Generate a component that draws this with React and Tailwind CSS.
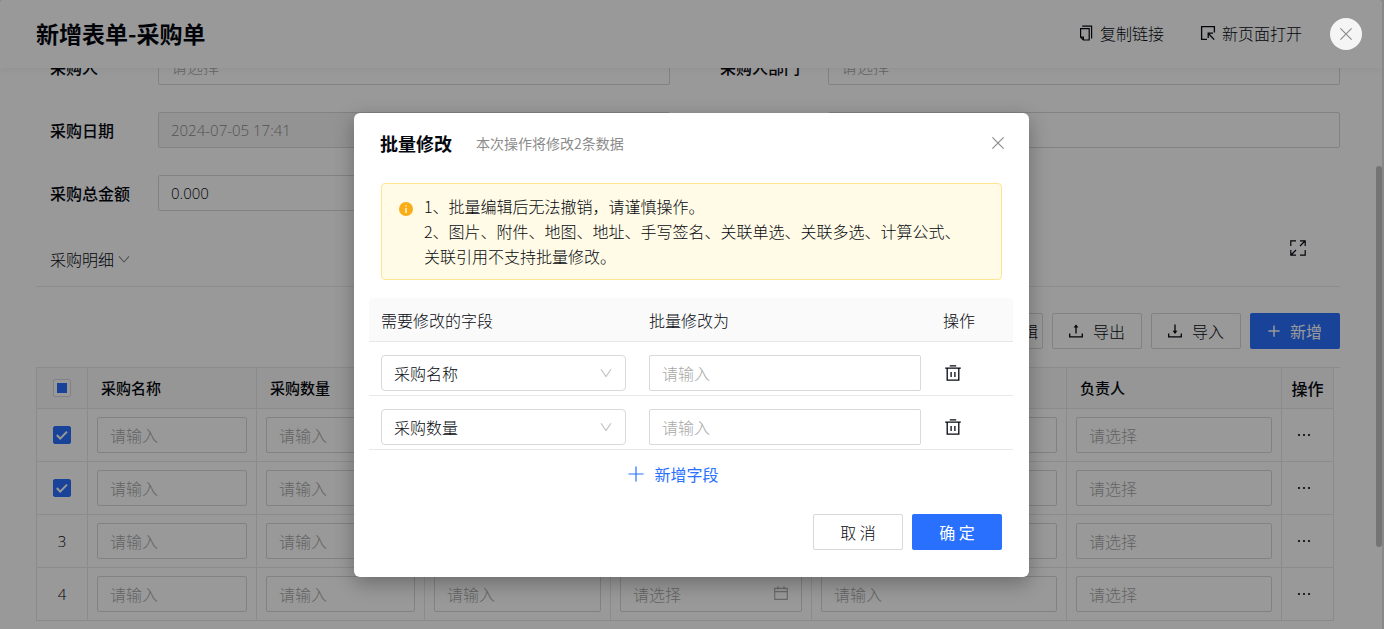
import { useState } from 'react';

const fieldClass = "w-full h-9 rounded-xs border border-[#d9d9d9] bg-white px-3 leading-6 placeholder:text-[16px] placeholder:text-[#a8a8a8] outline-none";

const columns = [
    { key: 'name', title: '采购名称', hint: '请输入' },
    { key: 'count', title: '采购数量', hint: '请输入' },
    { key: 'price', title: '采购单价', hint: '请输入' },
    { key: 'date', title: '到货日期', hint: '请选择', date: true },
    { key: 'remark', title: '备注', hint: '请输入' },
    { key: 'owner', title: '负责人', hint: '请选择' },
];

function CloseIcon({ className }) {
    return (
        <svg viewBox="0 0 14 14" className={className} fill="none" stroke="currentColor" strokeWidth="1.2">
            <path d="M1.4 1.4 12.6 12.6M12.6 1.4 1.4 12.6" />
        </svg>
    );
}

function PlusIcon({ className, strokeWidth }) {
    return (
        <svg viewBox="0 0 16 16" className={className} fill="none" stroke="currentColor" strokeWidth={strokeWidth}>
            <path d="M8 0.5V15.5M0.5 8H15.5" />
        </svg>
    );
}

function ChevronIcon({ className }) {
    return (
        <svg viewBox="0 0 12 12" className={className} fill="none" stroke="currentColor" strokeWidth="1.1">
            <path d="M1 2.2 6 9.6 11 2.2" />
        </svg>
    );
}

function FoldIcon({ className }) {
    return (
        <svg viewBox="0 0 12 12" className={className} fill="none" stroke="currentColor" strokeWidth="1.1">
            <path d="M1 3.4 6 9 11 3.4" />
        </svg>
    );
}

function CopyIcon() {
    return (
        <svg viewBox="0 0 16 16" className="size-4" fill="none" stroke="currentColor" strokeWidth="1.2">
            <path d="M4.2 1.2H13.6V13.6" />
            <path d="M2.6 3.6H11.2V15H5.4L2.6 12.2Z" />
            <path d="M2.6 12.2H5.4V15" />
        </svg>
    );
}

function OpenIcon() {
    return (
        <svg viewBox="0 0 16 16" className="size-4" fill="none" stroke="currentColor" strokeWidth="1.3">
            <path d="M14.4 7.5V1.6H1.6V14.4H7" />
            <path d="M8.2 8.2 14.2 14.6M8.2 13V8.2H13" />
        </svg>
    );
}

function ExpandIcon() {
    return (
        <svg viewBox="0 0 16 16" className="size-4" fill="none" stroke="currentColor" strokeWidth="1.2">
            <path d="M0.8 6V0.8H6M10 15.2H15.2V10" />
            <path d="M10 0.8H15.2V6M15 1 10 6M6 15.2H0.8V10M1 15 6 10" />
        </svg>
    );
}

function ExportIcon() {
    return (
        <svg viewBox="0 0 14 14" className="size-3.5" fill="none" stroke="currentColor" strokeWidth="1.3">
            <path d="M0.7 9.5V12.8H13.3V9.5M7 9.6V1.6" />
            <path d="M7 0.4 9.4 3.6H4.6Z" fill="currentColor" stroke="none" />
        </svg>
    );
}

function ImportIcon() {
    return (
        <svg viewBox="0 0 14 14" className="size-3.5" fill="none" stroke="currentColor" strokeWidth="1.3">
            <path d="M0.7 9.5V12.8H13.3V9.5M7 0.6V8" />
            <path d="M7 10 9.4 6.8H4.6Z" fill="currentColor" stroke="none" />
        </svg>
    );
}

function CalendarIcon({ className }) {
    return (
        <svg viewBox="0 0 14 14" className={className} fill="none" stroke="currentColor" strokeWidth="1.2">
            <path d="M0.7 2.3H13.3V13.3H0.7ZM0.7 5.7H13.3M4 0.2V3.6M10 0.2V3.6" />
        </svg>
    );
}

function TrashIcon() {
    return (
        <svg viewBox="0 0 16 16" className="size-4" fill="none" stroke="currentColor" strokeWidth="1.3">
            <path d="M0.2 3.2H15.8M4.8 0.9H11.2M2.2 3V15.2H13.8V3" />
            <path d="M6.1 7V12M9.9 7V12" />
        </svg>
    );
}

function RowCheckbox({ label }) {
    const [checked, setChecked] = useState(true);
    return (
        <label className="relative mx-auto block size-[18px]">
            <input
                type="checkbox"
                aria-label={label}
                checked={checked}
                onChange={() => setChecked(!checked)}
                className="block size-[18px] appearance-none rounded-xs border border-[#d9d9d9] bg-white checked:border-[#2970ff] checked:bg-[#2970ff]"
            />
            <svg viewBox="0 0 18 18" className="pointer-events-none absolute inset-0 size-[18px]" fill="none" stroke="white" strokeWidth="2">
                <path d="M3.8 9 7.2 12.6 14 5.6" />
            </svg>
        </label>
    );
}

function FormItem({ id, label, ...props }) {
    return (
        <div className="flex items-center">
            <label htmlFor={id} className="w-[108px] shrink-0 font-medium">{label}</label>
            <input id={id} className={`${fieldClass} text-[15px] font-['Open_Sans','Noto_Sans_CJK_SC',sans-serif] disabled:bg-[#f5f5f5] disabled:text-[#8c8c8c]`} {...props} />
        </div>
    );
}

function ToolButton({ icon, children }) {
    return (
        <button type="button" className="flex h-9 w-[90px] items-center justify-center gap-2.5 rounded-xs border border-[#d9d9d9] bg-white">
            {icon}
            {children}
        </button>
    );
}

function DetailTable() {
    return (
        <div className="mt-[18px] border-t border-[#e8e8e8] pr-1.5">
            <table className="w-full table-fixed border-separate border-spacing-0 border-l border-[#e8e8e8]">
                <colgroup>
                    <col className="w-[51px]" />
                    <col className="w-[169px]" />
                    <col className="w-[168px]" />
                    <col className="w-[186px]" />
                    <col className="w-[201px]" />
                    <col />
                    <col className="w-[215px]" />
                    <col className="w-[52px]" />
                </colgroup>
                <thead>
                    <tr className="h-[41px] bg-[#fafafa] text-left text-[15px]">
                        <th className="border-r border-b border-[#e8e8e8] p-0">
                            <label className="relative mx-auto flex size-[18px] items-center justify-center">
                                <input
                                    type="checkbox"
                                    aria-label="全选"
                                    className="absolute inset-0 size-[18px] appearance-none rounded-xs border border-[#d9d9d9] bg-white"
                                />
                                <span className="pointer-events-none relative size-2.5 bg-[#2970ff]" />
                            </label>
                        </th>
                        {columns.map(col => (
                            <th key={col.key} className="border-r border-b border-[#e8e8e8] py-0 pr-0 pl-[13px] font-medium">{col.title}</th>
                        ))}
                        <th className="border-r border-b border-[#e8e8e8] p-0 text-center text-[16px] font-medium">操作</th>
                    </tr>
                </thead>
                <tbody>
                    {[1, 2, 3, 4].map(n => (
                        <tr key={n} className="h-[53px]">
                            <td className="border-r border-b border-[#e8e8e8] p-0 text-center text-[15px] font-['Open_Sans',sans-serif]">
                                {n < 3 ? <RowCheckbox label={`第${n}行`} /> : n}
                            </td>
                            {columns.map(col => (
                                <td key={col.key} className="border-r border-b border-[#e8e8e8] px-[9px] py-0">
                                    <div className="relative">
                                        <input type="text" aria-label={col.title} placeholder={col.hint} className={`${fieldClass} block`} />
                                        {col.date && <CalendarIcon className="absolute top-2.5 right-3.5 size-3.5 text-[#b0b0b0]" />}
                                    </div>
                                </td>
                            ))}
                            <td className="border-r border-b border-[#e8e8e8] p-0">
                                <button type="button" aria-label="更多" className="mx-auto flex h-6 items-center pr-2">
                                    <svg viewBox="0 0 14 4" className="h-1 w-3.5" fill="currentColor">
                                        <circle cx="2" cy="2" r="1.1" />
                                        <circle cx="7" cy="2" r="1.1" />
                                        <circle cx="12" cy="2" r="1.1" />
                                    </svg>
                                </button>
                            </td>
                        </tr>
                    ))}
                </tbody>
            </table>
        </div>
    );
}

function BatchEditModal() {
    const [rows, setRows] = useState(['采购名称', '采购数量']);

    function updateRow(index, value) {
        setRows(rows.map((row, i) => (i === index ? value : row)));
    }

    return (
        <div role="dialog" aria-label="批量修改" className="w-[675px] rounded-md bg-white pb-[27px] shadow-[0_6px_20px_rgba(0,0,0,0.3)]">
            <div className="flex items-center pt-[17px] pr-6 pl-[26px]">
                <h2 className="text-[18px] leading-[26px] font-bold">批量修改</h2>
                <span className="ml-6 text-[14px] leading-[26px] font-normal text-[#8c8c8c]">本次操作将修改2条数据</span>
                <button type="button" aria-label="关闭" className="ml-auto text-[#8c8c8c]">
                    <CloseIcon className="size-3.5" />
                </button>
            </div>

            {/* 提示 */}
            <div className="mx-[27px] mt-[27px] flex rounded-sm border border-[#ffe58f] bg-[#fffbe6] py-2.5 pr-8 pl-[17px]">
                <svg viewBox="0 0 14 14" className="mt-2 mr-[11px] size-3.5 shrink-0">
                    <circle cx="7" cy="7" r="7" fill="#faad14" />
                    <path d="M7 3.2V4.6M7 6V11" stroke="white" strokeWidth="1.3" />
                </svg>
                <div className="leading-[25px]">
                    <p>1、批量编辑后无法撤销，请谨慎操作。</p>
                    <p>2、图片、附件、地图、地址、手写签名、关联单选、关联多选、计算公式、关联引用不支持批量修改。</p>
                </div>
            </div>

            <div className="mt-[18px] pr-4 pl-[15px]">
                <table className="w-full table-fixed border-separate border-spacing-0">
                    <colgroup>
                        <col className="w-[268px]" />
                        <col />
                        <col className="w-[82px]" />
                    </colgroup>
                    <thead>
                        <tr className="h-11 bg-[#fafafa] text-left">
                            <th className="rounded-tl-sm border-b border-[#e8e8e8] py-0 pr-0 pl-3 font-light">需要修改的字段</th>
                            <th className="border-b border-[#e8e8e8] py-0 pr-0 pl-3 font-light">批量修改为</th>
                            <th className="rounded-tr-sm border-b border-[#e8e8e8] py-0 pr-0 pl-3 font-light">操作</th>
                        </tr>
                    </thead>
                    <tbody>
                        {rows.map((row, i) => (
                            <tr key={i}>
                                <td className="border-b border-[#e8e8e8] pt-[13px] pr-[11px] pb-1 pl-3">
                                    <div className="relative">
                                        <select
                                            aria-label="需要修改的字段"
                                            value={row}
                                            onChange={e => updateRow(i, e.target.value)}
                                            className="block h-9 w-full appearance-none rounded-sm border border-[#d9d9d9] bg-white px-3 text-[16px] leading-6"
                                        >
                                            <option>采购名称</option>
                                            <option>采购数量</option>
                                        </select>
                                        <ChevronIcon className="pointer-events-none absolute top-3 right-3.5 size-3 text-[#bfbfbf]" />
                                    </div>
                                </td>
                                <td className="border-b border-[#e8e8e8] pt-[13px] pr-2.5 pb-1 pl-3">
                                    <input type="text" aria-label="批量修改为" placeholder="请输入" className={`${fieldClass} block`} />
                                </td>
                                <td className="border-b border-[#e8e8e8] pt-[13px] pb-1 pl-3.5">
                                    <button
                                        type="button"
                                        aria-label="删除"
                                        onClick={() => setRows(rows.filter((_, j) => j !== i))}
                                        className="block"
                                    >
                                        <TrashIcon />
                                    </button>
                                </td>
                            </tr>
                        ))}
                    </tbody>
                </table>
            </div>

            <div className="mt-3 flex justify-center pr-9">
                <button
                    type="button"
                    onClick={() => setRows([...rows, '采购名称'])}
                    className="flex items-center gap-2.5 font-normal text-[#2970ff]"
                >
                    <PlusIcon className="size-4" strokeWidth="1.2" />
                    新增字段
                </button>
            </div>

            <div className="mt-7 flex justify-end gap-[9px] pr-[27px]">
                <button type="button" className="h-9 w-[90px] rounded-xs border border-[#d9d9d9] bg-white">取 消</button>
                <button type="button" className="h-9 w-[90px] rounded-xs bg-[#2970ff] font-normal text-white">确 定</button>
            </div>
        </div>
    );
}

export default function App() {
    return (
        <div className="relative h-screen overflow-hidden bg-[#e4e4e4] pr-0.5 font-['Noto_Sans_CJK_SC',sans-serif] text-[16px] leading-6 font-light text-[#05080f]">
            <div className="flex h-full flex-col overflow-hidden rounded-t-sm bg-white">
                <header className="relative z-10 flex h-17 shrink-0 items-center justify-between bg-white pr-20 pb-0.5 pl-9 shadow-[0_2px_8px_rgba(0,0,0,0.05)]">
                    <h1 className="text-[23px] leading-8 font-bold">新增表单-采购单</h1>
                    <div className="flex items-center gap-9">
                        <button type="button" className="flex items-center gap-1.5"><CopyIcon />复制链接</button>
                        <button type="button" className="flex items-center gap-1.5"><OpenIcon />新页面打开</button>
                    </div>
                </header>

                <div className="flex min-h-0 flex-1">
                    <main className="min-w-0 flex-1 overflow-hidden pr-9 pl-9">
                        <div className="-mt-[19px] grid grid-cols-2 gap-x-[50px] gap-y-[27px] pl-3.5">
                            <FormItem id="buyer" label="采购人" placeholder="请选择" />
                            <FormItem id="dept" label="采购人部门" placeholder="请选择" />
                            <FormItem id="date" label="采购日期" defaultValue="2024-07-05 17:41" disabled />
                            <FormItem id="vendor" label="供应商" />
                            <FormItem id="total" label="采购总金额" defaultValue="0.000" />
                        </div>

                        {/* 采购明细 */}
                        <div className="flex items-start justify-between border-b border-[#ececec] pt-[29px] pr-[34px] pb-[15px] pl-3.5">
                            <button type="button" className="mt-[7px] flex items-center gap-1">
                                采购明细
                                <FoldIcon className="size-3 text-[#8c8c8c]" />
                            </button>
                            <button type="button" aria-label="全屏"><ExpandIcon /></button>
                        </div>

                        <div className="mt-[26px] flex justify-end gap-[9px]">
                            <button type="button" className="h-9 rounded-xs border border-[#d9d9d9] bg-white px-1">批量编辑</button>
                            <ToolButton icon={<ExportIcon />}>导出</ToolButton>
                            <ToolButton icon={<ImportIcon />}>导入</ToolButton>
                            <button type="button" className="flex h-9 w-[90px] items-center justify-center gap-2.5 rounded-xs bg-[#2970ff] font-normal text-white">
                                <PlusIcon className="size-3" strokeWidth="2" />
                                新增
                            </button>
                        </div>

                        <DetailTable />
                    </main>

                    {/* 滚动条 */}
                    <div className="w-1.5 shrink-0 pt-[98px]">
                        <div className="h-[381px] rounded-full bg-[#c1c1c1]" />
                    </div>
                </div>
            </div>

            {/* 遮罩 */}
            <div className="absolute inset-0 z-20 flex items-start justify-center bg-black/40 pt-[113px] pr-px">
                <BatchEditModal />
                <button
                    type="button"
                    aria-label="关闭表单"
                    className="absolute top-[18px] right-[22px] flex size-8 items-center justify-center rounded-full bg-[#f5f5f5] text-[#8c8c8c]"
                >
                    <CloseIcon className="size-3.5" />
                </button>
            </div>
        </div>
    );
}
